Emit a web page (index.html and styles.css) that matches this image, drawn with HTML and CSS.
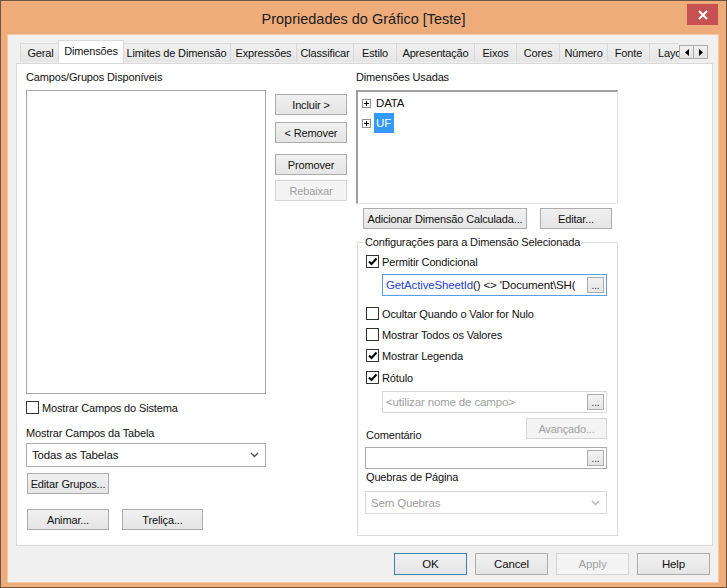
FILE: index.html
```html
<!DOCTYPE html>
<html lang="pt">
<head>
<meta charset="utf-8">
<title>Propriedades do Gráfico [Teste]</title>
<link rel="stylesheet" href="styles.css">
</head>
<body>
<div class="window">
  <div class="titlebar">
    <span class="title">Propriedades do Gráfico [Teste]</span>
    <div class="close"><svg width="10" height="10" viewBox="0 0 10 10"><path d="M1 1 L9 9 M9 1 L1 9" stroke="#fff" stroke-width="2"/></svg></div>
  </div>
  <div class="client">
    <div class="tabrow">
      <div class="tabstrip">
        <div class="tab t-geral">Geral</div>
        <div class="tab active t-dim">Dimensões</div>
        <div class="tab t-lim">Limites de Dimensão</div>
        <div class="tab t-exp">Expressões</div>
        <div class="tab t-cla">Classificar</div>
        <div class="tab t-est">Estilo</div>
        <div class="tab t-apr">Apresentação</div>
        <div class="tab t-eix">Eixos</div>
        <div class="tab t-cor">Cores</div>
        <div class="tab t-num">Número</div>
        <div class="tab t-fon">Fonte</div>
        <div class="tab t-lay">Layout</div>
      </div>
      <div class="scrollbtns">
        <div class="sbtn"><svg width="4" height="7" viewBox="0 0 4 7"><path d="M4 0 L0 3.5 L4 7 Z" fill="#000"/></svg></div>
        <div class="sbtn"><svg width="4" height="7" viewBox="0 0 4 7"><path d="M0 0 L4 3.5 L0 7 Z" fill="#000"/></svg></div>
      </div>
    </div>
    <div class="panel">
      <div class="col-left">
        <div class="label">Campos/Grupos Disponíveis</div>
        <div class="listbox"></div>
        <div class="check-row sys">
          <span class="cbox"></span><span>Mostrar Campos do Sistema</span>
        </div>
        <div class="label tbl-label">Mostrar Campos da Tabela</div>
        <div class="combo">
          <span>Todas as Tabelas</span>
          <svg width="9" height="6" viewBox="0 0 9 6"><path d="M1 1 L4.5 4.5 L8 1" stroke="#555" stroke-width="1.4" fill="none"/></svg>
        </div>
        <div class="btn btn-grupos">Editar Grupos...</div>
        <div class="btn-row">
          <div class="btn btn-animar">Animar...</div>
          <div class="btn btn-trelica">Treliça...</div>
        </div>
      </div>
      <div class="col-mid">
        <div class="btn mbtn m-incluir">Incluir &gt;</div>
        <div class="btn mbtn m-remover">&lt; Remover</div>
        <div class="btn mbtn m-promover">Promover</div>
        <div class="btn mbtn m-rebaixar disabled">Rebaixar</div>
      </div>
      <div class="col-right">
        <div class="label">Dimensões Usadas</div>
        <div class="tree">
          <div class="tree-item">
            <span class="exp"><svg width="9" height="9" viewBox="0 0 9 9"><rect x="0.5" y="0.5" width="8" height="8" fill="#fff" stroke="#919191"/><path d="M2 4.5 H7 M4.5 2 V7" stroke="#000"/></svg></span>
            <span class="node">DATA</span>
          </div>
          <div class="tree-item">
            <span class="exp"><svg width="9" height="9" viewBox="0 0 9 9"><rect x="0.5" y="0.5" width="8" height="8" fill="#fff" stroke="#919191"/><path d="M2 4.5 H7 M4.5 2 V7" stroke="#000"/></svg></span>
            <span class="node selected">UF</span>
          </div>
        </div>
        <div class="btn-row calc-row">
          <div class="btn btn-calc">Adicionar Dimensão Calculada...</div>
          <div class="btn btn-editar">Editar...</div>
        </div>
        <fieldset class="group">
          <legend>Configurações para a Dimensão Selecionada</legend>
          <div class="check-row first">
            <span class="cbox checked"><svg width="11" height="11" viewBox="0 0 11 11"><path d="M2 5.5 L4.5 8 L9.5 2.5" stroke="#000" stroke-width="2" fill="none"/></svg></span><span>Permitir Condicional</span>
          </div>
          <div class="field expr">
            <span class="field-text"><span class="fn">GetActiveSheetId</span>() &lt;&gt; 'Document\SH(</span>
            <span class="dots">...</span>
          </div>
          <div class="check-row r-ocultar">
            <span class="cbox"></span><span>Ocultar Quando o Valor for Nulo</span>
          </div>
          <div class="check-row">
            <span class="cbox"></span><span>Mostrar Todos os Valores</span>
          </div>
          <div class="check-row">
            <span class="cbox checked"><svg width="11" height="11" viewBox="0 0 11 11"><path d="M2 5.5 L4.5 8 L9.5 2.5" stroke="#000" stroke-width="2" fill="none"/></svg></span><span>Mostrar Legenda</span>
          </div>
          <div class="check-row r-rotulo">
            <span class="cbox checked"><svg width="11" height="11" viewBox="0 0 11 11"><path d="M2 5.5 L4.5 8 L9.5 2.5" stroke="#000" stroke-width="2" fill="none"/></svg></span><span>Rótulo</span>
          </div>
          <div class="field label-field disabled-field">
            <span class="field-text">&lt;utilizar nome de campo&gt;</span>
            <span class="dots">...</span>
          </div>
          <div class="adv-row">
            <span class="adv-label">Comentário</span>
            <div class="btn disabled btn-adv">Avançado...</div>
          </div>
          <div class="field comment-field">
            <span class="field-text"></span>
            <span class="dots">...</span>
          </div>
          <div class="label break-label">Quebras de Página</div>
          <div class="combo disabled-combo">
            <span>Sem Quebras</span>
            <svg width="9" height="6" viewBox="0 0 9 6"><path d="M1 1 L4.5 4.5 L8 1" stroke="#b5b5b5" stroke-width="1.4" fill="none"/></svg>
          </div>
        </fieldset>
      </div>
    </div>
    <div class="footer">
      <div class="btn fbtn default">OK</div>
      <div class="btn fbtn">Cancel</div>
      <div class="btn fbtn disabled">Apply</div>
      <div class="btn fbtn">Help</div>
    </div>
  </div>
</div>
</body>
</html>
```
FILE: styles.css
```css
* { box-sizing: border-box; }
html, body { margin: 0; padding: 0; }
body {
  font-family: "Liberation Sans", Arial, sans-serif;
  font-size: 11px;
  letter-spacing: -0.15px;
  color: #111;
  background: #fff;
}
.window {
  width: 727px;
  height: 588px;
  border: 1px solid #6b5646;
  background: #eeac7b;
  display: flex;
  flex-direction: column;
}
.titlebar {
  height: 34px;
  position: relative;
  display: flex;
  align-items: center;
  justify-content: center;
}
.title {
  font-size: 14.5px;
  letter-spacing: 0;
  color: #1b1b1b;
  margin-top: 1px;
}
.close {
  position: absolute;
  top: 3px;
  right: 8px;
  width: 31px;
  height: 21px;
  background: #c75050;
  display: flex;
  align-items: center;
  justify-content: center;
}
.client {
  width: 710px;
  height: 547px;
  margin-left: 7px;
  background: #f0f0f0;
  display: flex;
  flex-direction: column;
  padding: 6px 0 0 8px;
  box-shadow: 0 0 0 1px #f6c7a3;
}
.tabrow {
  height: 22px;
  display: flex;
  align-items: flex-end;
  position: relative;
  z-index: 2;
}
.tabstrip {
  width: 663px;
  height: 23px;
  padding-left: 4px;
  display: flex;
  align-items: flex-start;
  overflow: hidden;
}
.tab {
  flex: none;
  height: 19px;
  margin-top: 3px;
  border: 1px solid #d9d9d9;
  border-bottom: none;
  margin-right: -1px;
  background: linear-gradient(#f0f0f0, #e5e5e5);
  line-height: 18px;
  text-align: center;
  white-space: nowrap;
}
.tab.active {
  height: 23px;
  margin-top: 0;
  background: #fff;
  position: relative;
  z-index: 1;
  line-height: 20px;
  margin-left: -2px;
  margin-right: -3px;
}
.t-geral { width: 41px; }
.t-dim { width: 66px; }
.t-lim { width: 110px; padding-left: 1px; }
.t-exp { width: 67px; }
.t-cla { width: 58px; }
.t-est { width: 44px; }
.t-apr { width: 79px; }
.t-eix { width: 43px; }
.t-cor { width: 44px; }
.t-num { width: 49px; }
.t-fon { width: 43px; }
.t-lay { width: 50px; text-align: left; padding-left: 8px; }
.scrollbtns {
  display: flex;
  align-self: flex-start;
  margin-top: 4px;
}
.sbtn {
  width: 15px;
  height: 14px;
  border: 1px solid #acacac;
  margin-right: -1px;
  background: linear-gradient(#f0f0f0, #e5e5e5);
  display: flex;
  align-items: center;
  justify-content: center;
}
.panel {
  width: 697px;
  height: 483px;
  border: 1px solid #d9d9d9;
  background: #fff;
  display: flex;
  align-items: flex-start;
  padding: 6px 0 0 9px;
}
.label {
  height: 14px;
  line-height: 14px;
  white-space: nowrap;
}
.col-left {
  width: 240px;
  display: flex;
  flex-direction: column;
}
.listbox {
  margin-top: 6px;
  height: 304px;
  border: 1px solid #a5a5a5;
  background: #fff;
}
.check-row {
  display: flex;
  align-items: center;
  height: 13px;
  white-space: nowrap;
}
.cbox {
  flex: none;
  width: 13px;
  height: 13px;
  border: 1px solid #333;
  background: #fff;
  margin-right: 3px;
  display: flex;
  align-items: center;
  justify-content: center;
}
.check-row.sys { margin-top: 7px; }
.tbl-label { margin-top: 12px; }
.combo {
  height: 24px;
  margin-top: 3px;
  border: 1px solid #acacac;
  background: #fff;
  display: flex;
  align-items: center;
  justify-content: space-between;
  padding: 0 6px 0 5px;
  font-size: 11.5px;
}
.btn {
  flex: none;
  height: 21px;
  border: 1px solid #acacac;
  background: linear-gradient(#f0f0f0, #e5e5e5);
  display: flex;
  align-items: center;
  justify-content: center;
  white-space: nowrap;
}
.btn.disabled {
  color: #a0a0a0;
  border-color: #d5d5d5;
  background: #f4f4f4;
}
.btn-grupos {
  width: 82px;
  margin: 6px 0 0 1px;
}
.btn-row {
  display: flex;
}
.col-left .btn-row {
  margin: 15px 0 0 1px;
  gap: 13px;
}
.btn-animar { width: 82px; }
.btn-trelica { width: 81px; }
.col-mid {
  width: 72px;
  margin-left: 9px;
  display: flex;
  flex-direction: column;
}
.m-incluir { margin-top: 24px; }
.m-remover { margin-top: 7px; }
.m-promover { margin-top: 11px; }
.m-rebaixar { margin-top: 5px; }
.col-right {
  width: 262px;
  margin-left: 9px;
  display: flex;
  flex-direction: column;
}
.tree {
  margin-top: 6px;
  height: 114px;
  border-top: 2px solid #a0a0a0;
  border-left: 2px solid #a0a0a0;
  border-right: 1px solid #e3e3e3;
  border-bottom: 1px solid #e3e3e3;
  background: #fff;
  padding: 1px 0 0 4px;
  font-size: 11.5px;
}
.tree-item {
  height: 20px;
  display: flex;
  align-items: center;
}
.exp {
  width: 9px;
  height: 9px;
  display: flex;
  margin-right: 3px;
}
.exp svg { display: block; }
.node {
  height: 20px;
  line-height: 20px;
  padding: 0 3px 0 2px;
}
.node.selected {
  background: #3399ff;
  color: #fff;
}
.calc-row {
  margin: 4px 0 0 7px;
  gap: 13px;
}
.btn-calc { width: 164px; }
.btn-editar { width: 72px; }
.group {
  margin: 6px 0 0 1px;
  width: 261px;
  height: 301px;
  border: 1px solid #dcdcdc;
  padding: 6px 0 0 8px;
  min-width: 0;
  display: block;
}
.group legend {
  padding: 0 2px;
  margin-left: -3px;
  height: 14px;
  line-height: 14px;
}
.field {
  height: 22px;
  border: 1px solid #acacac;
  background: #fff;
  display: flex;
  align-items: center;
  justify-content: space-between;
  padding: 0 2px 0 3px;
  font-size: 11.5px;
  white-space: nowrap;
  overflow: hidden;
}
.field-text { overflow: hidden; }
.dots {
  flex: none;
  width: 17px;
  height: 16px;
  border: 1px solid #acacac;
  background: linear-gradient(#f2f2f2, #e5e5e5);
  font-size: 10px;
  display: flex;
  align-items: flex-end;
  justify-content: center;
  line-height: 12px;
  color: #333;
}
.expr {
  width: 225px;
  margin: 6px 0 0 16px;
  border-color: #569de5;
}
.fn { color: #1f3fd6; }
.r-ocultar { margin-top: 11px; }
.group .check-row + .check-row { margin-top: 8px; }
.group .check-row.r-rotulo { margin-top: 9px; }
.label-field {
  width: 225px;
  margin: 7px 0 0 16px;
  border-color: #d9d9d9;
  color: #a0a0a0;
}
.adv-row {
  height: 24px;
  margin-top: 5px;
  width: 241px;
  display: flex;
  justify-content: space-between;
}
.adv-label {
  align-self: flex-end;
  line-height: 14px;
}
.btn-adv { width: 81px; }
.comment-field {
  width: 242px;
  margin: 5px 0 0 -1px;
}
.break-label { margin-top: 1px; }
.disabled-combo {
  width: 242px;
  margin: 7px 0 0 -1px;
  height: 23px;
  border-color: #d9d9d9;
  color: #a0a0a0;
}
.footer {
  display: flex;
  justify-content: flex-end;
  gap: 8px;
  margin-top: 7px;
  width: 694px;
}
.fbtn {
  width: 73px;
  height: 22px;
  font-size: 11.5px;
}
.fbtn.default { border-color: #3c7fb1; }
```
